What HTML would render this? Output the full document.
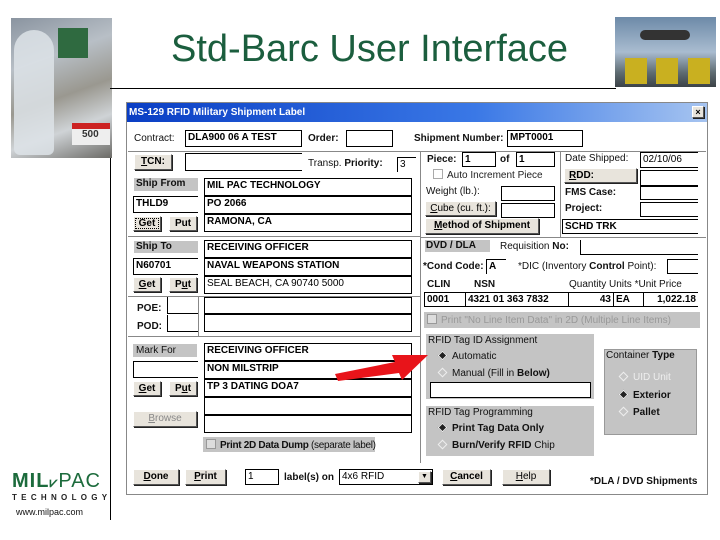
<!DOCTYPE html>
<html><head><meta charset="utf-8"><style>
*{margin:0;padding:0;box-sizing:border-box}
body{width:720px;height:540px;background:#fff;position:relative;overflow:hidden;font-family:"Liberation Sans",sans-serif}
.a{position:absolute}
.t{position:absolute;font-size:10px;font-weight:bold;color:#111;white-space:nowrap;line-height:12px}
.n{font-weight:normal}
.i{position:absolute;border:1px solid #000;background:#fff;font-size:10px;font-weight:bold;line-height:14px;padding-left:2px;white-space:nowrap;overflow:hidden}
.b{position:absolute;background:#e8e4dc;border:1px solid;border-color:#fff #555 #555 #fff;box-shadow:1px 1px 0 #222;font-size:10px;font-weight:bold;text-align:center;line-height:13px}
.g{position:absolute;background:#c4c4c4}
.hl{position:absolute;height:1px;background:#888}
.vl{position:absolute;width:1px;background:#888}
.cb{display:inline-block;width:10px;height:10px;border:1px solid #999;background:#ddd;vertical-align:-1px;margin-right:4px}
.r{display:inline-block;width:7px;height:7px;border:1px solid #eee;background:#c4c4c4;transform:rotate(45deg);margin:0 6px 0 3px;vertical-align:0}
.r.on{background:#222;border-color:#eee}
</style></head><body>
<!-- left photo -->
<div class="a" style="left:11px;top:18px;width:101px;height:140px;background:linear-gradient(160deg,#8a94a0 0%,#b8bfc6 30%,#9a9890 55%,#cfd3d6 75%,#6b6a66 100%)"></div>
<div class="a" style="left:14px;top:30px;width:40px;height:125px;background:#dde3e8;border-radius:20px 20px 6px 6px;opacity:.85"></div>
<div class="a" style="left:58px;top:28px;width:30px;height:30px;background:#2f6a40"></div>
<div class="a" style="left:72px;top:123px;width:38px;height:22px;background:#eee;border-top:6px solid #c22"></div>
<div class="a" style="left:82px;top:129px;font:bold 10px 'Liberation Sans';color:#333">500</div>
<div class="vl" style="left:110px;top:158px;height:362px;background:#000"></div>
<div class="hl" style="left:110px;top:88px;width:506px;background:#000"></div>
<!-- right photo -->
<div class="a" style="left:615px;top:17px;width:101px;height:70px;background:linear-gradient(180deg,#6d8aa8 0%,#a9bcd0 50%,#5d6a70 80%,#3b4246 100%)"></div>
<div class="a" style="left:640px;top:30px;width:50px;height:10px;background:#333;border-radius:5px"></div>
<div class="a" style="left:625px;top:58px;width:22px;height:26px;background:#c9b020"></div>
<div class="a" style="left:656px;top:58px;width:22px;height:26px;background:#c9b020"></div>
<div class="a" style="left:688px;top:58px;width:22px;height:26px;background:#c9b020"></div>
<div class="a" style="left:171px;top:28px;font-size:38px;color:#1b5e3e;white-space:nowrap">Std-Barc User Interface</div>
<!-- logo -->
<div class="a" style="left:12px;top:470px;font:900 20px 'Liberation Sans';color:#1c6b3c;letter-spacing:1px">MIL<span style="font-size:14px">⩗</span><span style="font-weight:normal">PAC</span></div>
<div class="a" style="left:12px;top:493px;font:bold 8px 'Liberation Sans';color:#222;letter-spacing:4.3px">TECHNOLOGY</div>
<div class="a" style="left:16px;top:507px;font:9px 'Liberation Sans';color:#111">www.milpac.com</div>

<!-- dialog -->
<div class="a" style="left:126px;top:102px;width:582px;height:393px;border:1px solid #888;background:#fff"></div>
<div class="a" style="left:127px;top:103px;width:580px;height:19px;background:linear-gradient(90deg,#0a3ec4,#3a78e6 60%,#a6c4f0)"></div>
<div class="t" style="left:129px;top:107px;color:#fff">MS-129 RFID Military Shipment Label</div>
<div class="b" style="left:692px;top:106px;width:12px;height:12px;line-height:10px;font-size:9px">×</div>

<div class="t n" style="left:134px;top:133px">Contract:</div>
<div class="i" style="left:185px;top:130px;width:117px;height:17px">DLA900 06 A TEST</div>
<div class="t" style="left:308px;top:133px">Order:</div>
<div class="i" style="left:346px;top:130px;width:47px;height:17px"></div>
<div class="t" style="left:414px;top:133px">Shipment Number:</div>
<div class="i" style="left:507px;top:130px;width:76px;height:17px">MPT0001</div>
<div class="hl" style="left:128px;top:151px;width:578px"></div>

<div class="b" style="left:134px;top:154px;width:38px;height:16px"><u>T</u>CN:</div>
<div class="i" style="left:185px;top:153px;width:117px;height:18px;border-right:none"></div>
<div class="t n" style="left:308px;top:158px">Transp. <b>Priority:</b></div>
<div class="i" style="left:397px;top:157px;width:19px;height:15px;border-bottom:none;border-right:none;font-weight:normal">3</div>
<div class="vl" style="left:420px;top:151px;height:312px"></div>

<div class="t" style="left:427px;top:154px">Piece:</div>
<div class="i" style="left:462px;top:152px;width:34px;height:15px;line-height:13px">1</div>
<div class="t" style="left:500px;top:154px">of</div>
<div class="i" style="left:516px;top:152px;width:39px;height:15px;line-height:13px">1</div>
<div class="vl" style="left:560px;top:151px;height:86px"></div>
<div class="t n" style="left:565px;top:153px">Date Shipped:</div>
<div class="i" style="left:640px;top:152px;width:58px;height:16px;border-right:none;font-weight:normal">02/10/06</div>
<div class="t n" style="left:433px;top:169px;color:#222"><span class="cb" style="background:#fff;border-color:#aaa"></span>Auto Increment Piece</div>
<div class="b" style="left:564px;top:168px;width:73px;height:15px;text-align:left;padding-left:4px"><u>R</u>DD:</div>
<div class="i" style="left:640px;top:170px;width:58px;height:16px;border-right:none"></div>
<div class="t n" style="left:426px;top:186px">Weight (lb.):</div>
<div class="i" style="left:501px;top:186px;width:54px;height:15px"></div>
<div class="t" style="left:565px;top:187px">FMS Case:</div>
<div class="i" style="left:640px;top:186px;width:58px;height:14px;border-right:none"></div>
<div class="b" style="left:425px;top:201px;width:71px;height:15px;font-weight:normal"><u>C</u>ube (cu. ft.):</div>
<div class="i" style="left:501px;top:203px;width:54px;height:15px"></div>
<div class="t" style="left:565px;top:203px">Project:</div>
<div class="i" style="left:640px;top:202px;width:58px;height:15px;border-right:none"></div>
<div class="b" style="left:425px;top:218px;width:114px;height:16px"><u>M</u>ethod of Shipment</div>
<div class="i" style="left:562px;top:219px;width:136px;height:15px;border-right:none;line-height:13px">SCHD TRK</div>
<div class="hl" style="left:420px;top:237px;width:286px"></div>

<!-- ship from -->
<div class="g" style="left:134px;top:178px;width:64px;height:13px"></div>
<div class="t" style="left:136px;top:178px">Ship From</div>
<div class="i" style="left:204px;top:178px;width:208px;height:18px">MIL PAC TECHNOLOGY</div>
<div class="i" style="left:204px;top:196px;width:208px;height:18px">PO 2066</div>
<div class="i" style="left:204px;top:214px;width:208px;height:18px">RAMONA, CA</div>
<div class="i" style="left:133px;top:196px;width:65px;height:17px;border-right:none">THLD9</div>
<div class="b" style="left:133px;top:216px;width:28px;height:15px;outline:1px dotted #000;outline-offset:-3px">Get</div>
<div class="b" style="left:169px;top:216px;width:28px;height:15px">Put</div>
<div class="hl" style="left:128px;top:236px;width:292px"></div>

<div class="g" style="left:134px;top:241px;width:64px;height:12px"></div>
<div class="t" style="left:136px;top:241px">Ship To</div>
<div class="i" style="left:204px;top:240px;width:208px;height:18px">RECEIVING OFFICER</div>
<div class="i" style="left:204px;top:258px;width:208px;height:18px">NAVAL WEAPONS STATION</div>
<div class="i" style="left:204px;top:276px;width:208px;height:18px;font-weight:normal">SEAL BEACH, CA 90740 5000</div>
<div class="i" style="left:133px;top:258px;width:65px;height:17px;border-right:none">N60701</div>
<div class="b" style="left:133px;top:277px;width:28px;height:15px"><u>G</u>et</div>
<div class="b" style="left:169px;top:277px;width:28px;height:15px">P<u>u</u>t</div>
<div class="hl" style="left:128px;top:296px;width:292px"></div>
<div class="vl" style="left:198px;top:296px;height:40px"></div>
<div class="t" style="left:137px;top:303px">POE:</div>
<div class="i" style="left:167px;top:297px;width:31px;height:17px;border-right:none;border-top:none"></div>
<div class="t" style="left:137px;top:321px">POD:</div>
<div class="i" style="left:167px;top:315px;width:31px;height:17px;border-right:none;border-top:none"></div>
<div class="i" style="left:204px;top:297px;width:208px;height:17px"></div>
<div class="i" style="left:204px;top:314px;width:208px;height:18px"></div>
<div class="hl" style="left:128px;top:336px;width:292px"></div>

<div class="g" style="left:133px;top:344px;width:64px;height:13px"></div>
<div class="t n" style="left:136px;top:345px">Mark For</div>
<div class="i" style="left:204px;top:343px;width:208px;height:18px">RECEIVING OFFICER</div>
<div class="i" style="left:204px;top:361px;width:208px;height:18px">NON MILSTRIP</div>
<div class="i" style="left:204px;top:379px;width:208px;height:18px">TP 3 DATING DOA7</div>
<div class="i" style="left:204px;top:397px;width:208px;height:18px"></div>
<div class="i" style="left:204px;top:415px;width:208px;height:18px"></div>
<div class="i" style="left:133px;top:361px;width:65px;height:17px;border-right:none"></div>
<div class="b" style="left:133px;top:381px;width:28px;height:15px"><u>G</u>et</div>
<div class="b" style="left:169px;top:381px;width:28px;height:15px">P<u>u</u>t</div>
<div class="b" style="left:133px;top:411px;width:64px;height:16px;color:#888;font-weight:normal"><u>B</u>rowse</div>
<div class="g" style="left:203px;top:437px;width:172px;height:15px"></div>
<div class="t" style="left:206px;top:439px;letter-spacing:-0.3px"><span class="cb"></span>Print 2D Data Dump <span class="n">(separate label)</span></div>

<!-- DVD/DLA -->
<div class="g" style="left:425px;top:240px;width:65px;height:12px"></div>
<div class="t" style="left:426px;top:240px">DVD / DLA</div>
<div class="t n" style="left:500px;top:241px">Requisition <b>No:</b></div>
<div class="i" style="left:580px;top:240px;width:118px;height:15px;border-right:none;border-top:none"></div>
<div class="t" style="left:423px;top:261px">*Cond Code:</div>
<div class="i" style="left:486px;top:259px;width:20px;height:15px;border-right:none;border-bottom:none;line-height:13px">A</div>
<div class="t n" style="left:518px;top:261px">*DIC (Inventory <b>Control</b> Point):</div>
<div class="i" style="left:667px;top:259px;width:31px;height:15px;border-right:none"></div>
<div class="t" style="left:427px;top:279px">CLIN</div>
<div class="t" style="left:474px;top:279px">NSN</div>
<div class="t n" style="left:569px;top:279px">Quantity Units *Unit Price</div>
<div class="i" style="left:424px;top:292px;width:42px;height:15px;line-height:13px">0001</div>
<div class="i" style="left:465px;top:292px;width:104px;height:15px;line-height:13px">4321 01 363 7832</div>
<div class="i" style="left:568px;top:292px;width:46px;height:15px;line-height:13px;text-align:right;padding-right:2px">43</div>
<div class="i" style="left:613px;top:292px;width:31px;height:15px;line-height:13px">EA</div>
<div class="i" style="left:643px;top:292px;width:55px;height:15px;line-height:13px;text-align:right;padding-right:2px;border-right:none">1,022.18</div>
<div class="g" style="left:424px;top:312px;width:276px;height:16px"></div>
<div class="t n" style="left:427px;top:314px;color:#999"><span class="cb"></span>Print "No Line Item Data" in 2D (Multiple Line Items)</div>

<!-- RFID boxes -->
<div class="g" style="left:426px;top:334px;width:168px;height:65px"></div>
<div class="t n" style="left:428px;top:335px">RFID Tag ID Assignment</div>
<div class="t n" style="left:436px;top:351px"><span class="r on"></span>Automatic</div>
<div class="t n" style="left:436px;top:368px"><span class="r"></span>Manual (Fill in <b>Below)</b></div>
<div class="i" style="left:430px;top:382px;width:161px;height:16px"></div>
<div class="g" style="left:426px;top:406px;width:168px;height:50px"></div>
<div class="t n" style="left:428px;top:407px">RFID Tag Programming</div>
<div class="t" style="left:436px;top:423px"><span class="r on"></span>Print Tag Data Only</div>
<div class="t" style="left:436px;top:440px"><span class="r"></span>Burn/Verify RFID <span class="n">Chip</span></div>
<div class="g" style="left:604px;top:349px;width:93px;height:86px;border:1px solid #999"></div>
<div class="t n" style="left:606px;top:350px">Container <b>Type</b></div>
<div class="t n" style="left:617px;top:372px;color:#eee"><span class="r"></span>UID Unit</div>
<div class="t" style="left:617px;top:390px"><span class="r on"></span>Exterior</div>
<div class="t" style="left:617px;top:407px"><span class="r"></span>Pallet</div>

<!-- arrow -->
<svg class="a" style="left:320px;top:335px" width="115" height="50"><polygon points="15,39 75,27 72,20 108,20 82,45 79,38 18,46" fill="#e8141a"/></svg>

<!-- bottom -->
<div class="b" style="left:133px;top:469px;width:46px;height:16px"><u>D</u>one</div>
<div class="b" style="left:185px;top:469px;width:41px;height:16px"><u>P</u>rint</div>
<div class="i" style="left:245px;top:469px;width:34px;height:16px;font-weight:normal;line-height:14px">1</div>
<div class="t" style="left:284px;top:472px">label(s) on</div>
<div class="i" style="left:339px;top:469px;width:94px;height:16px;font-weight:normal">4x6 RFID</div>
<div class="b" style="left:418px;top:471px;width:13px;height:12px;font-size:7px;line-height:10px">▼</div>
<div class="b" style="left:442px;top:469px;width:49px;height:16px"><u>C</u>ancel</div>
<div class="b" style="left:502px;top:469px;width:48px;height:16px;font-weight:normal"><u>H</u>elp</div>
<div class="t" style="left:590px;top:476px">*DLA / DVD Shipments</div>
</body></html>
